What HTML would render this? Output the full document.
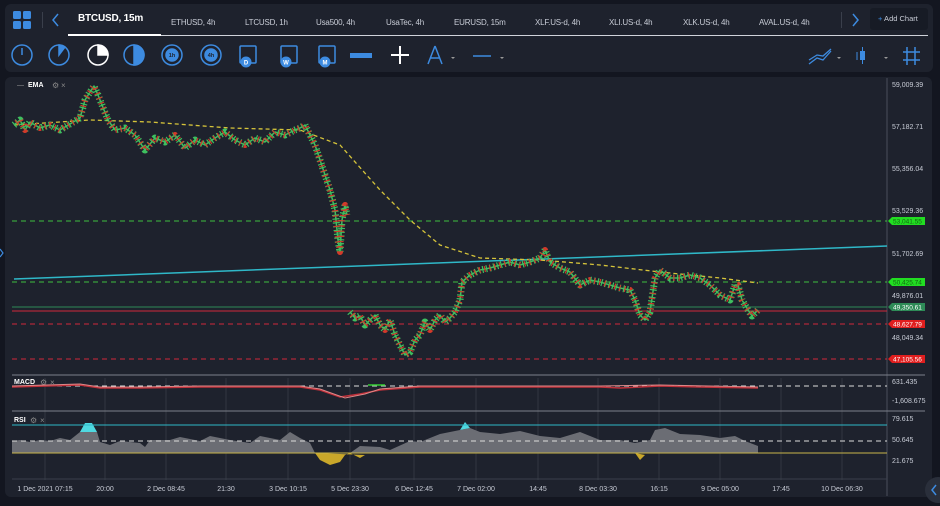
<!DOCTYPE html>
<html><head><meta charset="utf-8"><style>
*{margin:0;padding:0;box-sizing:border-box}
body{width:940px;height:506px;background:#131620;font-family:"Liberation Sans",sans-serif;overflow:hidden;position:relative;color:#d1d4dc}
.top{position:absolute;left:5px;top:4px;width:928px;height:68px;background:#1e222d;border-radius:6px}
.tab{position:absolute;top:14px;font-size:8px;color:#c8ccd6;letter-spacing:-0.2px}
.abs{position:absolute}
.chart{position:absolute;left:5px;top:77px;width:927px;height:420px;background:#1e222d;border-radius:6px}
svg text{font-family:"Liberation Sans",sans-serif}
</style></head><body>
<div class="top">
  <svg class="abs" style="left:8px;top:7px" width="18" height="18"><rect x="0" y="0" width="8" height="8" rx="1.5" fill="#3d8be0"/><rect x="10" y="0" width="8" height="8" rx="1.5" fill="#3d8be0"/><rect x="0" y="10" width="8" height="8" rx="1.5" fill="#3d8be0"/><rect x="10" y="10" width="8" height="8" rx="1.5" fill="#3d8be0"/></svg>
  <div class="abs" style="left:37px;top:8px;width:1px;height:16px;background:#3a3f4b"></div>
  <svg class="abs" style="left:47px;top:9px" width="8" height="14"><path d="M6 1L1 7L6 13" stroke="#3d8be0" stroke-width="1.5" fill="none"/></svg>
  <div class="tab" style="left:73px;top:9px;font-size:10px;color:#fff;font-weight:bold">BTCUSD, 15m</div>
  <div class="abs" style="left:63px;top:30px;width:93px;height:2px;background:#fff"></div>
  <div class="abs" style="left:156px;top:31px;width:767px;height:1px;background:#d0d3da"></div>
  <div class="tab" style="left:166px">ETHUSD, 4h</div>
  <div class="tab" style="left:240px">LTCUSD, 1h</div>
  <div class="tab" style="left:311px">Usa500, 4h</div>
  <div class="tab" style="left:381px">UsaTec, 4h</div>
  <div class="tab" style="left:449px">EURUSD, 15m</div>
  <div class="tab" style="left:530px">XLF.US-d, 4h</div>
  <div class="tab" style="left:604px">XLI.US-d, 4h</div>
  <div class="tab" style="left:678px">XLK.US-d, 4h</div>
  <div class="tab" style="left:754px">AVAL.US-d, 4h</div>
  <div class="abs" style="left:836px;top:8px;width:1px;height:16px;background:#3a3f4b"></div>
  <svg class="abs" style="left:846px;top:9px" width="8" height="14"><path d="M2 1L7 7L2 13" stroke="#3d8be0" stroke-width="1.5" fill="none"/></svg>
  <div class="abs" style="left:865px;top:4px;width:58px;height:22px;background:#171b25;border-radius:3px;font-size:7.5px;color:#c8ccd6;line-height:22px;padding-left:8px"><span style="color:#3d8be0">+</span> Add Chart</div>
  <svg class="abs" style="left:0;top:34px" width="928" height="34">
    <g stroke="#3d8be0" stroke-width="1.5" fill="none">
      <circle cx="17" cy="17" r="10"/><line x1="17" y1="17" x2="17" y2="10"/>
      <circle cx="54" cy="17" r="10"/><path d="M54 17V7A10 10 0 0 1 60 9Z" fill="#3d8be0"/>
      <circle cx="93" cy="17" r="10" stroke="#fff"/><path d="M93 17V7A10 10 0 0 1 103 17Z" fill="#fff" stroke="#fff"/>
      <circle cx="129" cy="17" r="10"/><path d="M129 7A10 10 0 0 1 129 27Z" fill="#3d8be0"/>
      <circle cx="167" cy="17" r="10"/><circle cx="167" cy="17" r="6" fill="#3d8be0"/>
      <circle cx="206" cy="17" r="10"/><circle cx="206" cy="17" r="6" fill="#3d8be0"/>
      <rect x="235" y="8" width="16" height="17" rx="1"/><rect x="276" y="8" width="16" height="17" rx="1"/><rect x="314" y="8" width="16" height="17" rx="1"/>
    </g>
    <g font-size="5.5" fill="#1e222d" text-anchor="middle" font-weight="bold"><text x="167" y="19">1h</text><text x="206" y="19">4h</text></g>
    <g fill="#3d8be0"><circle cx="241" cy="24" r="5.5"/><circle cx="281" cy="24" r="5.5"/><circle cx="320" cy="24" r="5.5"/></g>
    <g font-size="6" fill="#fff" text-anchor="middle" font-weight="bold"><text x="241" y="26.5">D</text><text x="281" y="26.5">W</text><text x="320" y="26.5">M</text></g>
    <rect x="345" y="15" width="22" height="5" fill="#3d8be0"/>
    <path d="M395 8V26M386 17H404" stroke="#fff" stroke-width="2"/>
    <path d="M430 8L423 26M430 8L437 26M425 20H435" stroke="#3d8be0" stroke-width="1.5" fill="none"/>
    <path d="M446 19l2 2 2-2" fill="#999"/>
    <line x1="468" y1="18" x2="486" y2="18" stroke="#3d8be0" stroke-width="1.5"/><path d="M495 19l2 2 2-2" fill="#999"/>
    <path d="M804 26L812 20L818 22L826 13M804 22L812 17L818 18L826 11" stroke="#3d8be0" stroke-width="1.3" fill="none"/><path d="M832 19l2 2 2-2" fill="#999"/>
    <rect x="855" y="13" width="5" height="9" fill="#3d8be0"/><line x1="857.5" y1="9" x2="857.5" y2="26" stroke="#3d8be0"/><line x1="852" y1="14" x2="852" y2="22" stroke="#3d8be0"/><path d="M879 19l2 2 2-2" fill="#999"/>
    <path d="M902 9V27M910 9V27M898 14H915M898 22H915" stroke="#3d8be0" stroke-width="1.5"/>
  </svg>
</div>
<div class="chart"></div>
<svg class="abs" style="left:0;top:0" width="940" height="506">
  <line x1="887" y1="78" x2="887" y2="496" stroke="#4a4f5b"/>
  <g stroke="#3a3f4b" stroke-width="0.7">
    <line x1="45" y1="378" x2="45" y2="480"/><line x1="105" y1="378" x2="105" y2="480"/><line x1="166" y1="378" x2="166" y2="480"/><line x1="226" y1="378" x2="226" y2="480"/><line x1="288" y1="378" x2="288" y2="480"/><line x1="350" y1="378" x2="350" y2="480"/><line x1="414" y1="378" x2="414" y2="480"/><line x1="476" y1="378" x2="476" y2="480"/><line x1="538" y1="378" x2="538" y2="480"/><line x1="598" y1="378" x2="598" y2="480"/><line x1="659" y1="378" x2="659" y2="480"/><line x1="720" y1="378" x2="720" y2="480"/><line x1="781" y1="378" x2="781" y2="480"/><line x1="842" y1="378" x2="842" y2="480"/>
  </g>
  <line x1="12" y1="375" x2="925" y2="375" stroke="#7c808a"/>
  <line x1="12" y1="411" x2="925" y2="411" stroke="#7c808a"/>
  <line x1="12" y1="479" x2="887" y2="479" stroke="#3a3f4b"/>
  <line x1="12" y1="221" x2="887" y2="221" stroke="#3fbf3f" stroke-dasharray="5 4"/>
  <line x1="12" y1="282" x2="887" y2="282" stroke="#3fbf3f" stroke-dasharray="5 4"/>
  <line x1="12" y1="307" x2="887" y2="307" stroke="#2e8b57"/>
  <line x1="12" y1="311" x2="887" y2="311" stroke="#d0283a"/>
  <line x1="12" y1="324" x2="887" y2="324" stroke="#d0283a" stroke-dasharray="5 4"/>
  <line x1="12" y1="359" x2="887" y2="359" stroke="#d0283a" stroke-dasharray="5 4"/>
  <line x1="14" y1="279" x2="887" y2="246" stroke="#2fb8c8" stroke-width="1.5"/>
  <polyline points="14,125 90,120 150,122 230,128 300,130 340,145 380,190 410,220 440,245 480,258 540,260 600,265 660,272 720,278 758,283" fill="none" stroke="#d6c43a" stroke-width="1.3" stroke-dasharray="4 3"/>
  <g fill="none" stroke-linejoin="round">
  <g stroke="#3fbf5f" stroke-width="1.5">
  <polyline id="p1" points="14,125 20,120 25,130 30,122 40,128 50,125 60,130 70,124 80,118 85,100 90,92 94,86 98,95 102,105 108,120 115,130 125,128 135,135 145,150 155,138 165,142 175,135 185,148 195,140 205,145 215,138 225,132 235,140 245,145 255,138 265,142 275,132 285,135 295,130 300,128 305,125 310,135 315,145 320,160 325,175 330,190 335,210 338,240 340,252 342,220 345,205 347,215"/>
  <polyline id="p2" points="350,312 355,318 360,316 365,325 370,320 375,315 380,325 385,330 390,320 395,335 400,345 405,355 410,352 415,340 420,335 425,322 430,330 435,320 440,315 445,322 450,318 455,312 460,300 462,282 470,275 480,270 490,268 500,265 510,262 520,265 530,262 540,258 545,250 550,262 560,268 570,272 580,285 590,280 600,282 610,285 620,288 630,290 635,300 640,315 645,320 650,312 655,278 660,270 670,278 680,278 690,275 700,278 710,285 720,295 730,300 735,285 738,285 742,300 748,310 752,316 758,310"/>
  </g>
  <g stroke-width="7" stroke-dasharray="1.2 2.6">
    <use href="#p1" stroke="#3fbf5f"/><use href="#p2" stroke="#3fbf5f"/>
  </g>
  <g stroke-width="6" stroke-dasharray="1.2 4" stroke-dashoffset="2">
    <use href="#p1" stroke="#d23a2a"/><use href="#p2" stroke="#d23a2a"/>
  </g>
  </g>
  <g font-size="7" fill="#c8ccd6">
    <text x="892" y="87">59,009.39</text><text x="892" y="129">57,182.71</text><text x="892" y="171">55,356.04</text><text x="892" y="213">53,529.36</text><text x="892" y="256">51,702.69</text><text x="892" y="298">49,876.01</text><text x="892" y="340">48,049.34</text>
    <text x="892" y="384">631.435</text><text x="892" y="403">-1,608.675</text>
    <text x="892" y="421">79.615</text><text x="892" y="442">50.645</text><text x="892" y="463">21.675</text>
  </g>
  <g font-size="6.5" fill="#fff">
    <path d="M888 221l4-4h33v8h-33z" fill="#22dd22"/><text x="893" y="223.5" fill="#116611">53,041.55</text>
    <path d="M888 282l4-4h33v8h-33z" fill="#22dd22"/><text x="893" y="284.5" fill="#116611">50,425.74</text>
    <path d="M888 307l4-4h33v8h-33z" fill="#2e8b57"/><text x="893" y="309.5">49,350.61</text>
    <path d="M888 324l4-4h33v8h-33z" fill="#e01e1e"/><text x="893" y="326.5">48,627.79</text>
    <path d="M888 359l4-4h33v8h-33z" fill="#e01e1e"/><text x="893" y="361.5">47,105.56</text>
  </g>
  <g font-size="7" fill="#fff" font-weight="bold"><text x="28" y="87">EMA</text><text x="14" y="384">MACD</text><text x="14" y="422">RSI</text></g>
  <text x="17" y="87" font-size="7" fill="#999">—</text>
  <g fill="#888" font-size="8"><text x="52" y="88">⚙</text><text x="61" y="88">×</text><text x="40" y="385">⚙</text><text x="50" y="385">×</text><text x="30" y="423">⚙</text><text x="40" y="423">×</text></g>
  <line x1="12" y1="386" x2="887" y2="386" stroke="#ddd" stroke-dasharray="5 4"/>
  <polyline points="12,387 80,385 100,388 140,388 200,387 300,387 320,390 340,397 360,394 380,390 420,387 500,387 600,387 620,388 660,386 700,387 758,388" fill="none" stroke="#c0303a" stroke-width="1.5"/>
  <polyline points="12,386 80,384 100,387 140,387 200,386 300,386 320,389 345,398 365,394 380,389 420,386 500,386 600,386 660,385 758,387" fill="none" stroke="#d88" stroke-width="1"/>
  <line x1="368" y1="385" x2="385" y2="385" stroke="#3c3" stroke-width="1.5"/>
  <polygon fill="#6b6d74" points="12,453 12,441 20,440 30,442 40,440 50,441 60,438 70,440 80,432 85,425 92,425 97,432 100,442 110,445 120,441 140,443 145,447 150,440 170,440 180,437 200,441 210,436 230,440 250,443 260,436 280,440 290,432 300,438 310,443 315,453"/>
  <polygon fill="#6b6d74" points="350,453 360,446 380,447 390,450 410,441 420,442 440,434 460,430 470,428 480,432 500,434 520,431 540,436 560,438 580,432 600,440 620,440 635,443 650,440 655,430 665,428 680,434 700,435 720,438 735,436 745,441 758,446 758,453"/>
  <polygon fill="#c9a72a" points="315,453 320,460 330,465 340,462 345,455 350,453 360,458 365,455"/>
  <polygon fill="#c9a72a" points="635,453 640,460 645,455"/>
  <polygon fill="#4fd8e0" points="80,432 85,423 92,423 97,432"/>
  <polygon fill="#4fd8e0" points="460,430 465,422 470,428"/>
  <line x1="12" y1="425" x2="887" y2="425" stroke="#2fb8c8"/>
  <line x1="12" y1="441" x2="887" y2="441" stroke="#ddd" stroke-dasharray="5 4"/>
  <line x1="12" y1="453" x2="887" y2="453" stroke="#c9b54a"/>
  <g font-size="7" fill="#c8ccd6" text-anchor="middle">
    <text x="45" y="491">1 Dec 2021 07:15</text><text x="105" y="491">20:00</text><text x="166" y="491">2 Dec 08:45</text><text x="226" y="491">21:30</text><text x="288" y="491">3 Dec 10:15</text><text x="350" y="491">5 Dec 23:30</text><text x="414" y="491">6 Dec 12:45</text><text x="476" y="491">7 Dec 02:00</text><text x="538" y="491">14:45</text><text x="598" y="491">8 Dec 03:30</text><text x="659" y="491">16:15</text><text x="720" y="491">9 Dec 05:00</text><text x="781" y="491">17:45</text><text x="842" y="491">10 Dec 06:30</text>
  </g>
  <circle cx="938" cy="490" r="13" fill="#2a2f3b"/><path d="M936 485l-4 5 4 5" stroke="#3d8be0" stroke-width="1.5" fill="none"/>
  <path d="M0 249l3 4-3 4" stroke="#3d8be0" stroke-width="1.2" fill="none"/>
</svg>
</body></html>
